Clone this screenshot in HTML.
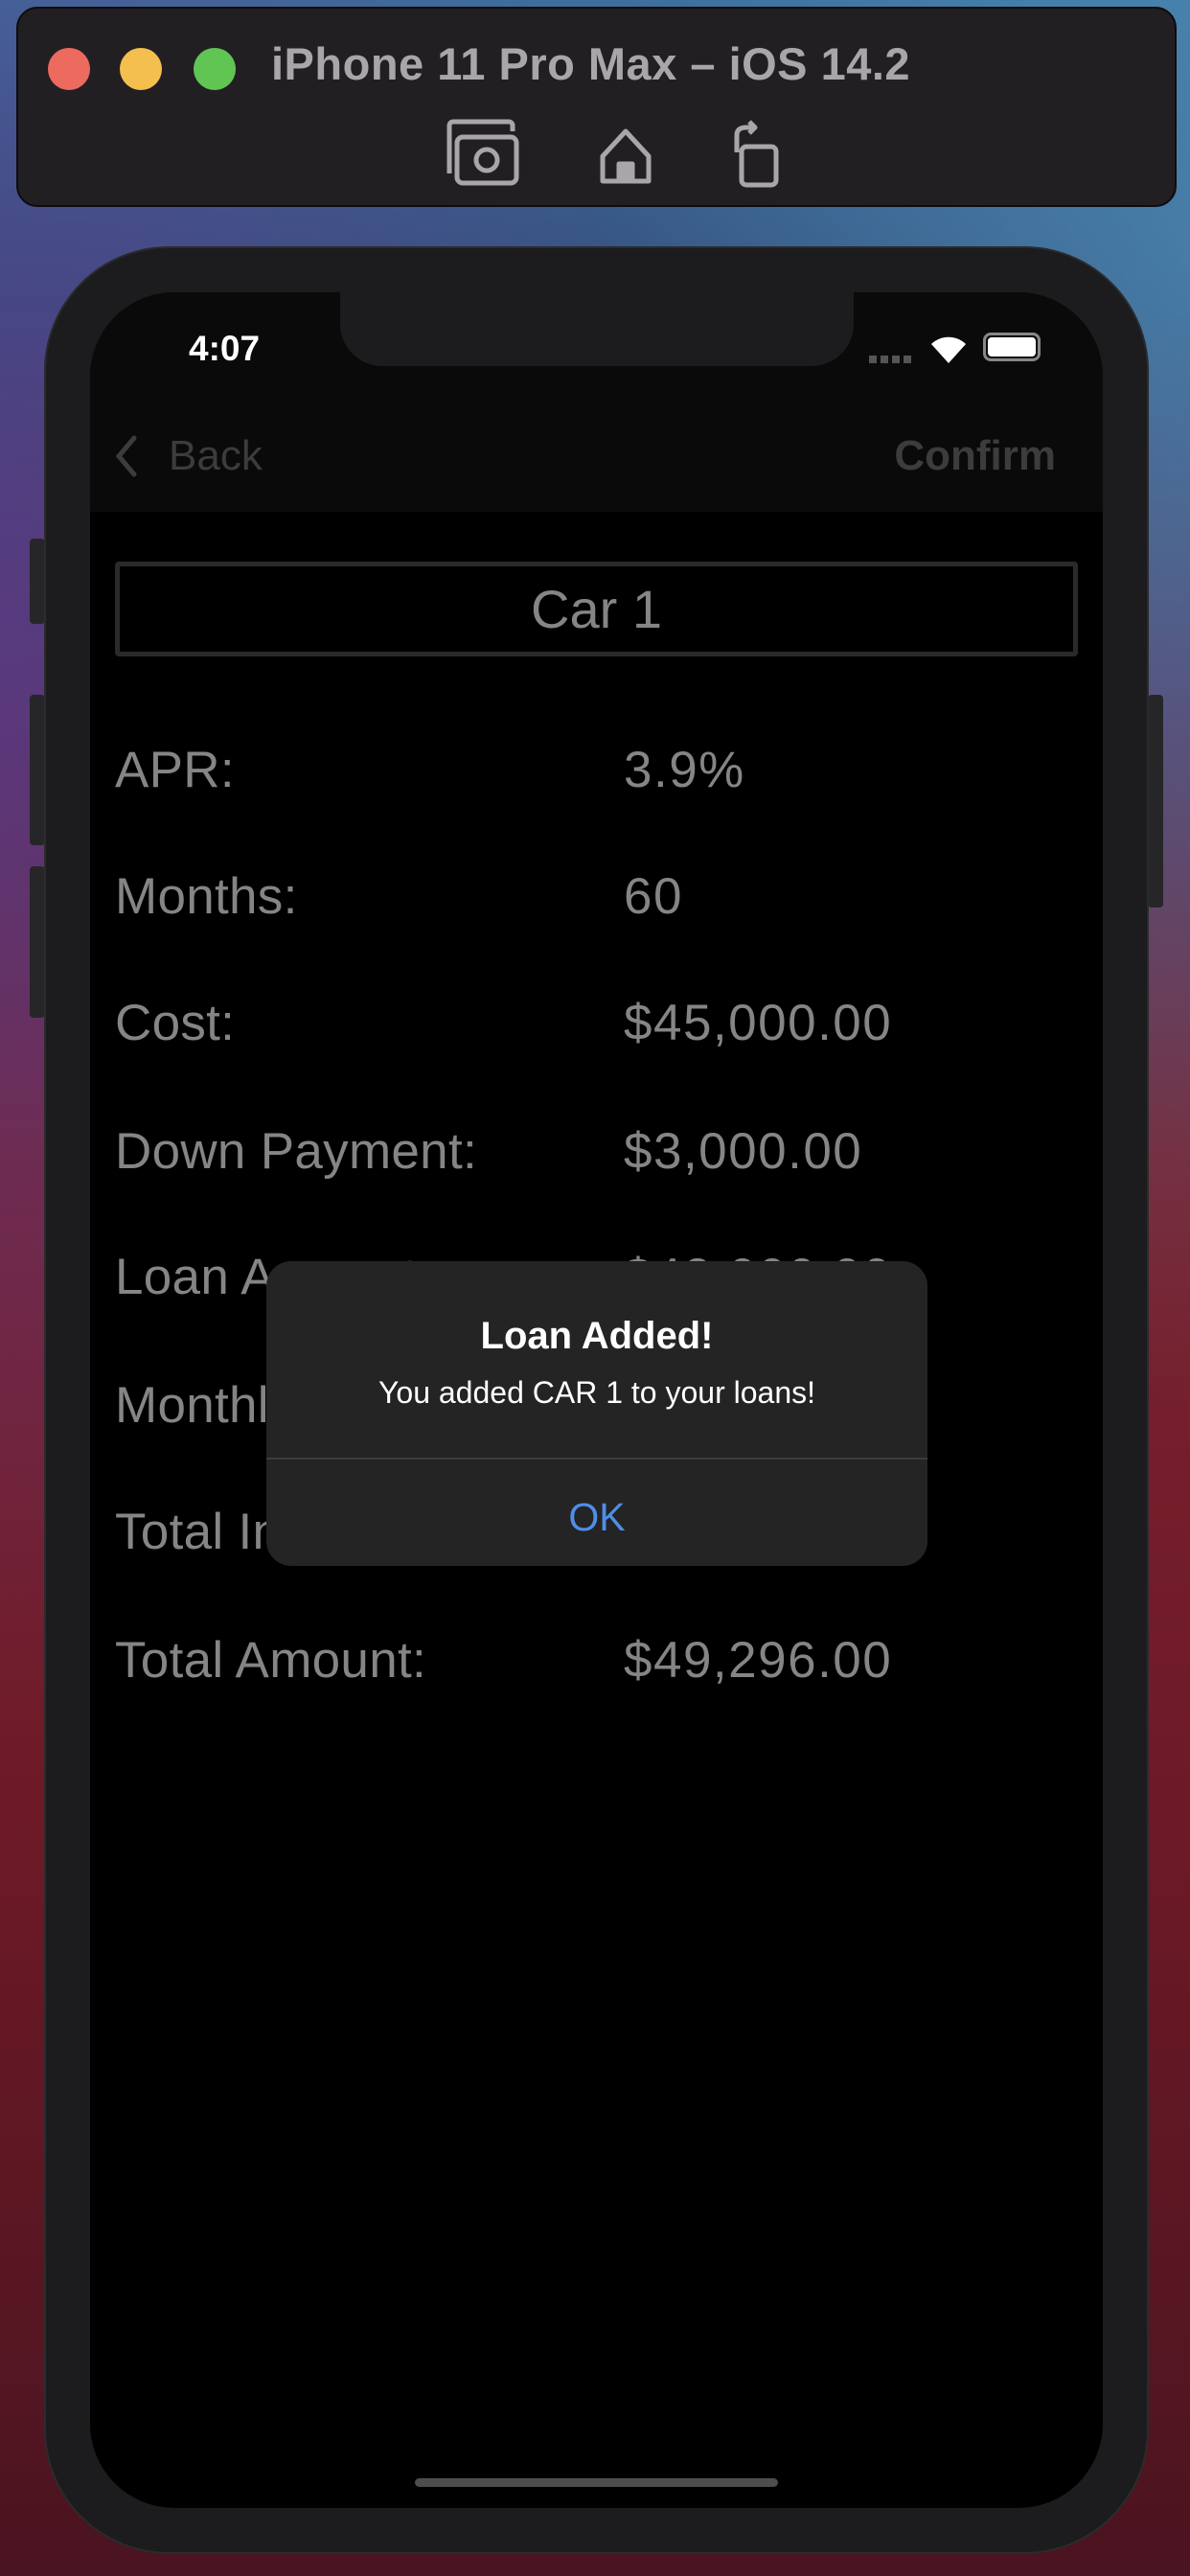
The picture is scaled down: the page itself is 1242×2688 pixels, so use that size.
<!DOCTYPE html>
<html><head><meta charset="utf-8"><style>
*{margin:0;padding:0;box-sizing:border-box}
body{width:1242px;height:2688px;overflow:hidden;position:relative;font-family:"Liberation Sans",sans-serif;
background:linear-gradient(180deg,#3d6e9c 0%,#36507e 12%,#5a2f5a 28%,#7a2230 45%,#6e1a26 70%,#4a1420 100%);}
.bg2{position:absolute;inset:0;background:radial-gradient(ellipse at 0% 25%,rgba(90,60,140,.7),transparent 40%),radial-gradient(ellipse at 100% 10%,rgba(80,150,190,.6),transparent 35%);}
.title{position:absolute;left:17px;top:7px;width:1211px;height:209px;background:#221f22;border-radius:22px;border:2px solid #0e0c0e}
.dot{position:absolute;top:41px;width:44px;height:44px;border-radius:50%}
.ttext{position:absolute;left:264px;top:30px;font-size:47px;font-weight:bold;color:#a9a5a9;letter-spacing:0.5px}
.phone{position:absolute;left:46px;top:257px;width:1153px;height:2408px;background:#1c1c1e;border-radius:130px;border:2px solid #2b2b2d}
.btn{position:absolute;background:#262628;border-radius:4px}
.screen{position:absolute;left:94px;top:305px;width:1057px;height:2312px;background:#000;border-radius:88px;overflow:hidden}
.nav{position:absolute;left:0;top:0;width:100%;height:229px;background:#0a0a0a}
.notch{position:absolute;left:261px;top:0;width:536px;height:77px;background:#1c1c1e;border-radius:0 0 44px 44px}
.row{position:absolute;left:26px;font-size:53px;color:#858585;width:1000px;letter-spacing:0.3px}
.row span{position:absolute;left:531px;top:0;letter-spacing:1.5px}
</style></head><body>
<div class="bg2"></div>
<div class="title">
<div class="dot" style="left:31px;background:#ec6a5e"></div>
<div class="dot" style="left:106px;background:#f4bf4f"></div>
<div class="dot" style="left:183px;background:#61c554"></div>
<div class="ttext">iPhone 11 Pro Max – iOS 14.2</div>
<svg style="position:absolute;left:430px;top:110px" width="380" height="80" viewBox="0 0 380 80" fill="none" stroke="#a9a5a9" stroke-width="5" stroke-linejoin="round">
<path d="M20 62 V12 a4 4 0 0 1 4-4 h58 a4 4 0 0 1 4 4 v6"/>
<rect x="28" y="24" width="62" height="48" rx="6"/>
<circle cx="59" cy="48" r="11"/>
<path d="M180 70 V44 L204 18 L228 44 V70 Z"/>
<rect x="197" y="52" width="14" height="18" fill="#a9a5a9"/>
<rect x="325" y="34" width="36" height="40" rx="5"/>
<path d="M320 40 V22 q0-8 10-8 h6" /><path d="M333 8 l6 6 -6 6"/>
</svg>
</div>
<div class="btn" style="left:31px;top:562px;width:16px;height:89px"></div>
<div class="btn" style="left:31px;top:725px;width:16px;height:157px"></div>
<div class="btn" style="left:31px;top:904px;width:16px;height:158px"></div>
<div class="btn" style="left:1198px;top:725px;width:16px;height:222px"></div>
<div class="phone"></div>
<div class="screen">
<div class="nav"></div>
<div class="notch"></div>
<div style="position:absolute;left:103px;top:38px;font-size:37px;font-weight:bold;color:#fff">4:07</div>
<div style="position:absolute;left:813px;top:66px;width:48px;height:8px;background:repeating-linear-gradient(90deg,#555 0 8px,transparent 8px 12px)"></div>
<svg style="position:absolute;left:876px;top:40px" width="40" height="36" viewBox="0 0 40 36"><path d="M20 34 L2 14 A26 26 0 0 1 38 14 Z" fill="#fff"/></svg>
<div style="position:absolute;left:932px;top:42px;width:60px;height:30px;border:3px solid #888;border-radius:8px;padding:2px"><div style="width:100%;height:100%;background:#fff;border-radius:4px"></div></div>
<svg style="position:absolute;left:26px;top:148px" width="24" height="46" viewBox="0 0 24 46"><path d="M20 4 L4 23 L20 42" fill="none" stroke="#3c3c3c" stroke-width="5" stroke-linecap="round"/></svg>
<div style="position:absolute;left:82px;top:146px;font-size:44px;color:#3c3c3c">Back</div>
<div style="position:absolute;right:49px;top:146px;font-size:44px;font-weight:bold;color:#3c3c3c">Confirm</div>
<div style="position:absolute;left:26px;top:281px;width:1005px;height:99px;border:5px solid #2a2a2c;border-radius:4px;text-align:center;font-size:56px;line-height:89px;color:#858585">Car 1</div>
<div class="row" style="top:468px">APR:<span>3.9%</span></div>
<div class="row" style="top:600px">Months:<span>60</span></div>
<div class="row" style="top:732px">Cost:<span>$45,000.00</span></div>
<div class="row" style="top:866px">Down Payment:<span>$3,000.00</span></div>
<div class="row" style="top:997px">Loan Amount:<span>$42,000.00</span></div>
<div class="row" style="top:1131px">Monthly Payment:<span>$771.60</span></div>
<div class="row" style="top:1263px">Total Interest:<span>$4,296.00</span></div>
<div class="row" style="top:1397px">Total Amount:<span>$49,296.00</span></div>
<div style="position:absolute;left:184px;top:1011px;width:690px;height:318px;background:#242424;border-radius:26px;overflow:hidden;text-align:center">
<div style="position:absolute;top:56px;width:100%;font-size:40px;font-weight:bold;color:#fff">Loan Added!</div>
<div style="position:absolute;top:119px;width:100%;font-size:32px;color:#fff">You added CAR 1 to your loans!</div>
<div style="position:absolute;top:205px;width:100%;height:2px;background:#3c3c3c"></div>
<div style="position:absolute;top:244px;width:100%;font-size:41px;color:#4f8ee8">OK</div>
</div>
<div style="position:absolute;left:339px;top:2281px;width:379px;height:9px;border-radius:5px;background:#4d4d4d"></div>
</div>
</body></html>
